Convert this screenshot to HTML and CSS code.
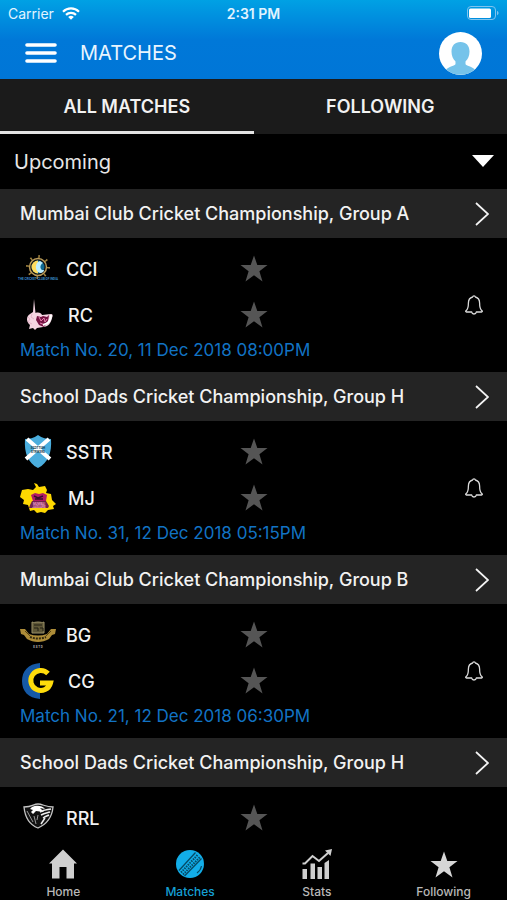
FILE: index.html
```html
<!DOCTYPE html>
<html lang="en">

<head>
    <meta charset="utf-8">
    <meta name="viewport" content="width=device-width, initial-scale=1">
    <title>Matches</title>
    <link rel="stylesheet" href="styles.css">
</head>

<body>
    <!-- shared icons -->
    <svg class="sprite" aria-hidden="true">
        <symbol id="star" viewBox="0 0 28 28">
            <path d="M14 0.500l3.300 9.600h10.200l-8.100 6.200 3.100 10.200-8.500-6.200-8.500 6.200 3.100-10.200L0.500 10.100h10.200z" />
        </symbol>
        <symbol id="chevron" viewBox="0 0 14 24">
            <path d="M1 1l12 11L1 23" fill="none" stroke="#f4f4f4" stroke-width="1.700" />
        </symbol>
        <symbol id="bell" viewBox="0 0 18 20">
            <path d="M9 0.800c-.8 0-1.300.5-1.400 1.200C5 2.700 3.400 4.900 3.400 8c0 4.500-.5 6.300-2.400 7.800-.6.600-.3 1.200.4 1.200h5.300c.2 1.300 1 2 2.300 2s2.100-.7 2.300-2h5.300c.7 0 1-.6.400-1.200-1.900-1.500-2.400-3.300-2.400-7.800 0-3.100-1.600-5.300-4.200-6C10.300 1.300 9.800.8 9 .8z"
                fill="none" stroke="#dcdcdc" stroke-width="1.300" stroke-linejoin="round" />
        </symbol>
    </svg>

    <header class="header">
        <div class="status-bar">
            <div class="carrier">
                <span>Carrier</span>
                <svg width="18" height="13" viewBox="0 0 18 13" fill="none" stroke="#fff" stroke-width="2.200">
                    <path d="M1 4.700a11.500 11.500 0 0 1 16 0" />
                    <path d="M4 7.900a7.200 7.200 0 0 1 10 0" />
                    <path d="M9 12.800L6.200 10a4 4 0 0 1 5.600 0z" fill="#fff" stroke="none" />
                </svg>
            </div>
            <div class="time">2:31 PM</div>
            <svg class="battery" width="32" height="15" viewBox="0 0 32 15">
                <rect x="0.500" y="0.500" width="28" height="13" rx="3.500" fill="none" stroke="#7fc4ee" />
                <rect x="2" y="2.500" width="22" height="9.500" rx="1.500" fill="#fff" />
                <path d="M30 5c2 .6 2 3.600 0 4.200z" fill="#7fc4ee" />
            </svg>
        </div>
        <div class="title-bar">
            <button class="menu-btn" aria-label="Menu">
                <svg width="32" height="20" viewBox="0 0 32 20" stroke="#fff" stroke-width="3.600" stroke-linecap="round">
                    <path d="M2 2h28M2 10h28M2 18h28" />
                </svg>
            </button>
            <h1>MATCHES</h1>
            <button class="avatar" aria-label="Profile">
                <svg width="43" height="43" viewBox="0 0 43 43">
                    <circle cx="21.500" cy="21.500" r="21.500" fill="#fff" />
                    <path d="M21.500 10c5.600 0 9 3.700 9 9.500 0 4.300-1.500 7.800-4 10v2.500c0 1.500 5 2 9.400 5.300a21.500 21.500 0 0 1-28.800 0c4.400-3.300 9.400-3.800 9.400-5.300v-2.500c-2.500-2.200-4-5.700-4-10 0-5.800 3.400-9.500 9-9.500z" fill="#75c3ea" />
                </svg>
            </button>
        </div>
    </header>

    <div class="tabs" role="tablist">
        <button class="tab active" role="tab" aria-selected="true">ALL MATCHES</button>
        <button class="tab" role="tab" aria-selected="false">FOLLOWING</button>
    </div>

    <div class="filter">
        <select class="filter-select" aria-label="Match status">
            <option>Upcoming</option>
            <option>Live</option>
            <option>Completed</option>
        </select>
        <svg class="filter-arrow" width="22" height="12" viewBox="0 0 22 12">
            <path d="M0 0h22L11 12z" fill="#fff" />
        </svg>
    </div>

    <main class="matches">
        <section>
            <a class="series" href="#">
                <span>Mumbai Club Cricket Championship, Group A</span>
                <svg width="14" height="24"><use href="#chevron" /></svg>
            </a>
            <div class="match">
                <div class="team">
                    <svg class="team-logo" viewBox="0 0 36 36">
                        <circle cx="18" cy="16" r="10.500" fill="none" stroke="#a28440" stroke-width="3" stroke-dasharray="1.500 6.750" />
                        <circle cx="18" cy="16" r="8.500" fill="#111" stroke="#b89a58" stroke-width="1.500" />
                        <circle cx="18" cy="16" r="6.500" fill="#126b91" />
                        <path d="M18 9.500a6.500 6.500 0 0 0 0 13z" fill="#ffdc5c" />
                        <path d="M20 10c-5 1-6 10 0 12 3 0 4-2 4-3-4 1-5-5-1-7z" fill="#bdeeff" />
                        <text x="18" y="29" text-anchor="middle" class="tiny blue">THE CRICKET CLUB OF INDIA</text>
                    </svg>
                    <span>CCI</span>
                </div>
                <button class="star" aria-label="Follow CCI"><svg width="28" height="28"><use href="#star" /></svg></button>
                <div class="team away">
                    <svg class="team-logo" viewBox="0 0 36 36">
                        <path d="M14 2l1.500 14c3-1 6 0 6.500 2l9-1c2 0 2 2 1 4-1 5-4 9-9 9l-6 1-2 2-2-2-4 1 1-4c-4-3-4-9 0-11l3-2z" fill="#f5d5e2" />
                        <path d="M17 19l4 1 2-1 4 1 2-2-1 7-4 5-5-2-3-5z" fill="#761343" />
                        <path d="M19 20l2 4 3-3 1 4 2-3M20 26l5 2" fill="none" stroke="#e683ae" />
                        <path d="M8 20l2 2-2 3 4 2M12 17l-1 3 3 2" fill="none" stroke="#e5b5c8" />
                        <path d="M31 18c0 6-4 9-8 10" fill="none" stroke="#fff" stroke-width="2" />
                    </svg>
                    <span>RC</span>
                </div>
                <button class="star" aria-label="Follow RC"><svg width="28" height="28"><use href="#star" /></svg></button>
                <div class="match-info">Match No. 20, 11 Dec 2018 08:00PM</div>
                <button class="bell" aria-label="Notify me"><svg width="18" height="20"><use href="#bell" /></svg></button>
            </div>
        </section>

        <section>
            <a class="series" href="#">
                <span>School Dads Cricket Championship, Group H</span>
                <svg width="14" height="24"><use href="#chevron" /></svg>
            </a>
            <div class="match">
                <div class="team">
                    <svg class="team-logo" viewBox="0 0 36 36">
                        <path d="M18 1c4 3 9 4 13 4 1 14-3 24-13 29C8 29 4 19 5 5c4 0 9-1 13-4z" fill="#4aaddd" />
                        <path d="M7 5l23 20M29 5L6 25" stroke="#fff" stroke-width="4" />
                        <text x="18" y="15" text-anchor="middle" class="tiny dark">SCOTTISH</text>
                        <text x="18" y="19" text-anchor="middle" class="tiny dark">STRIKERS</text>
                    </svg>
                    <span>SSTR</span>
                </div>
                <button class="star" aria-label="Follow SSTR"><svg width="28" height="28"><use href="#star" /></svg></button>
                <div class="team away">
                    <svg class="team-logo" viewBox="0 0 36 36">
                        <path d="M14 3l3 1 2 3 6-1 2 4-1 3 5 1 1 6 4 4-3 2 1 3-6 1-3 3-4-1-4 1-3-3-4 1-2-6-5-1 1-4-4-3 2-7 6-1 5 1 3-3z" fill="#fed800" />
                        <path d="M11 15l4-2 4 1 4-1 4 2-1 6H13z" fill="#b11b66" />
                        <path d="M14 16l4 2 5-2M15 19h8" stroke="#35102a" stroke-width="1.500" fill="none" />
                        <path d="M12 21h14l3 5-1 2H9l1-3z" fill="#70234c" />
                        <text x="19" y="24.500" text-anchor="middle" class="tiny pink">MUMBAI</text>
                        <text x="19" y="27.500" text-anchor="middle" class="tiny pink">JAGUARS</text>
                    </svg>
                    <span>MJ</span>
                </div>
                <button class="star" aria-label="Follow MJ"><svg width="28" height="28"><use href="#star" /></svg></button>
                <div class="match-info">Match No. 31, 12 Dec 2018 05:15PM</div>
                <button class="bell" aria-label="Notify me"><svg width="18" height="20"><use href="#bell" /></svg></button>
            </div>
        </section>

        <section>
            <a class="series" href="#">
                <span>Mumbai Club Cricket Championship, Group B</span>
                <svg width="14" height="24"><use href="#chevron" /></svg>
            </a>
            <div class="match">
                <div class="team">
                    <svg class="team-logo" viewBox="0 0 36 36">
                        <path d="M12 5c2 1 3 0 6 0s4 1 6 0v11H12z" fill="#5e5737" stroke="#9a9068" />
                        <path d="M14 8h8M14 11h4v3M20 11h3v3" stroke="#201e14" fill="none" />
                        <path d="M0 12l5 0 4 5c6 2 12 2 18 0l4-5h5l-1 5-3 1-3 4c-7 4-15 4-22 0l-3-4-3-1z" fill="#ad8c38" />
                        <path d="M10 20c5 2 11 2 16 0" stroke="#352b10" stroke-width="2" stroke-dasharray="2 1" fill="none" />
                        <path d="M5 14l5 5M31 14l-5 5" stroke="#594514" />
                        <text x="18" y="31" text-anchor="middle" class="tiny gray">E S T D</text>
                    </svg>
                    <span>BG</span>
                </div>
                <button class="star" aria-label="Follow BG"><svg width="28" height="28"><use href="#star" /></svg></button>
                <div class="team away">
                    <svg class="team-logo" viewBox="0 0 36 36">
                        <path d="M20 0v6a12.500 12.500 0 0 0 0 24v6C8 35 2 28 2 18S8 1 20 0z" fill="#1559a6" />
                        <path d="M28 10.500A10 10 0 1 0 30.500 20H20" stroke="#ffdc0b" stroke-width="5" fill="none" />
                    </svg>
                    <span>CG</span>
                </div>
                <button class="star" aria-label="Follow CG"><svg width="28" height="28"><use href="#star" /></svg></button>
                <div class="match-info">Match No. 21, 12 Dec 2018 06:30PM</div>
                <button class="bell" aria-label="Notify me"><svg width="18" height="20"><use href="#bell" /></svg></button>
            </div>
        </section>

        <section>
            <a class="series" href="#">
                <span>School Dads Cricket Championship, Group H</span>
                <svg width="14" height="24"><use href="#chevron" /></svg>
            </a>
            <div class="match">
                <div class="team">
                    <svg class="team-logo" viewBox="0 0 36 36">
                        <path d="M4 7c9 0 9-3 14-3s7 3 15 3c-1 11-6 17-15 21C10 25 5 17 4 7z" fill="#111" stroke="#c5c5c5" stroke-width="1.300" />
                        <path d="M12 7c4-2 10-2 13 2l-5-1 4 4-8-1-3 3-2-2 2-2-3-1z" fill="#fff" />
                        <path d="M20 12c5-3 8-2 11-3M21 15c4-2 6-2 9-3M23 18c3-2 4-2 6-3M21 24l4-6" stroke="#eee" stroke-width="1.500" fill="none" />
                        <path d="M7 11l6 11M14 16l2 8M18 15l-1 5" stroke="#999" fill="none" />
                    </svg>
                    <span>RRL</span>
                </div>
                <button class="star" aria-label="Follow RRL"><svg width="28" height="28"><use href="#star" /></svg></button>
            </div>
        </section>
    </main>

    <nav class="bottom-nav">
        <a class="nav-item" href="#">
            <svg width="30" height="30" viewBox="0 0 30 30" fill="#cfcfcf">
                <path d="M15 0.500l14 14H26v15h-7.500V18h-7v11.500H4v-15H1z" />
            </svg>
            <span>Home</span>
        </a>
        <a class="nav-item current" href="#">
            <svg width="30" height="30" viewBox="0 0 30 30">
                <circle cx="15" cy="15" r="14" fill="#12ade8" />
                <path d="M4 21.500L20.500 3.500M9.500 27L26.500 9.500" stroke="#064b66" stroke-width="1.300" />
                <path d="M6 23.500L22.500 6M8 25.500L25 8" stroke="#064b66" stroke-width="2" stroke-dasharray="1.500 1" />
                <path d="M26.500 17c-.5 3-2 5-4.500 7" stroke="#064b66" stroke-width="1.200" fill="none" />
            </svg>
            <span>Matches</span>
        </a>
        <a class="nav-item" href="#">
            <svg width="30" height="30" viewBox="0 0 30 30" fill="#cfcfcf">
                <path d="M0.500 20h4.500v10H0.500zM8.500 14.500H13V30H8.500zM15.500 18H20v12h-4.500zM22.500 14l4.500-3v19h-4.500z" />
                <path d="M0.500 14.500h2.500l7.500-7.500 6.500 5 9-8" fill="none" stroke="#cfcfcf" stroke-width="2" />
                <path d="M23 1.500L30 0l-1.500 7z" />
            </svg>
            <span>Stats</span>
        </a>
        <a class="nav-item" href="#">
            <svg width="30" height="30" fill="#d6d6d6"><use href="#star" x="1" y="2" width="28" height="28" /></svg>
            <span>Following</span>
        </a>
    </nav>
</body>

</html>
```

FILE: styles.css
```css
* {
    box-sizing: border-box;
}

body {
    margin: 0;
    height: 100vh;
    display: flex;
    flex-direction: column;
    background-color: #000;
    color: #f2f2f2;
    font-family: Inter, Roboto, sans-serif;
}

button {
    padding: 0;
    border: none;
    background: none;
    color: inherit;
    font-family: inherit;
    cursor: pointer;
}

a {
    color: inherit;
    text-decoration: none;
}

svg {
    display: block;
    flex: none;
}

.sprite {
    position: absolute;
    width: 0;
    height: 0;
}

/* header */
.header {
    flex: none;
    background: linear-gradient(#00a1e4 0, #0078d8 40px, #0076d7);
}

.status-bar {
    display: grid;
    grid-template-columns: 1fr auto 1fr;
    align-items: center;
    height: 27px;
    padding: 0 8px;
    font-size: 14px;
    color: #e2f4ff;
}

.carrier {
    display: flex;
    align-items: center;
    gap: 8px;
}

.time {
    font-weight: 600;
}

.battery {
    justify-self: end;
}

.title-bar {
    display: flex;
    align-items: center;
    height: 52px;
    padding: 0 25px;
    gap: 23px;
}

.title-bar h1 {
    flex: 1;
    margin: 0;
    font-size: 20px;
    font-weight: 400;
    color: #e8f5ff;
}

/* tabs */
.tabs {
    display: flex;
    flex: none;
    height: 55px;
    background-color: #1b1b1b;
}

.tab {
    flex: 1;
    border-top: 3px solid transparent;
    border-bottom: 3px solid transparent;
    font-size: 18px;
    font-weight: 600;
}

.tab.active {
    border-bottom-color: #e4e4e4;
}

/* filter drop-down */
.filter {
    position: relative;
    flex: none;
    height: 55px;
}

.filter-select {
    appearance: none;
    width: 100%;
    height: 100%;
    padding: 0 14px;
    border: none;
    background: #000;
    color: #e6e6e6;
    font-family: inherit;
    font-size: 20px;
}

.filter-arrow {
    position: absolute;
    top: 21px;
    right: 13px;
    pointer-events: none;
}

/* match list */
.matches {
    flex: 1;
    min-height: 0;
    overflow: hidden;
}

.series {
    display: flex;
    align-items: center;
    justify-content: space-between;
    height: 49px;
    padding: 0 18px 0 20px;
    background-color: #242424;
    font-size: 18px;
    font-weight: 500;
}

.match {
    display: grid;
    grid-template-columns: 1fr 28px 1fr;
    grid-template-rows: 46px 46px 26px;
    padding: 8px 20px;
}

.team {
    grid-column: 1;
    display: flex;
    align-items: center;
    gap: 10px;
    font-size: 18px;
    font-weight: 500;
}

.team.away {
    gap: 12px;
}

.team-logo {
    width: 36px;
    height: 36px;
    overflow: visible;
}

.star {
    grid-column: 2;
    display: flex;
    align-items: center;
    justify-content: center;
    fill: #555;
}

.match-info {
    grid-column: 1 / -1;
    grid-row: 3;
    line-height: 24px;
    font-size: 17px;
    color: #1273c4;
}

.bell {
    grid-column: 3;
    grid-row: 1 / 4;
    align-self: center;
    justify-self: end;
    padding: 4px;
}

/* lettering inside the team logos */
.tiny {
    font-family: Roboto, sans-serif;
    font-size: 3px;
    font-weight: 700;
}

.blue {
    fill: #3c8fd0;
}

.dark {
    fill: #173746;
}

.pink {
    fill: #f5a5cc;
}

.gray {
    fill: #b0b0b0;
}

/* bottom navigation */
.bottom-nav {
    display: flex;
    flex: none;
    height: 56px;
    padding-top: 5px;
}

.nav-item {
    flex: 1;
    display: flex;
    flex-direction: column;
    align-items: center;
    gap: 5px;
    font-size: 12px;
    line-height: 16px;
    font-weight: 500;
    color: #b8b8b8;
}

.nav-item.current {
    color: #159fd3;
}
```
